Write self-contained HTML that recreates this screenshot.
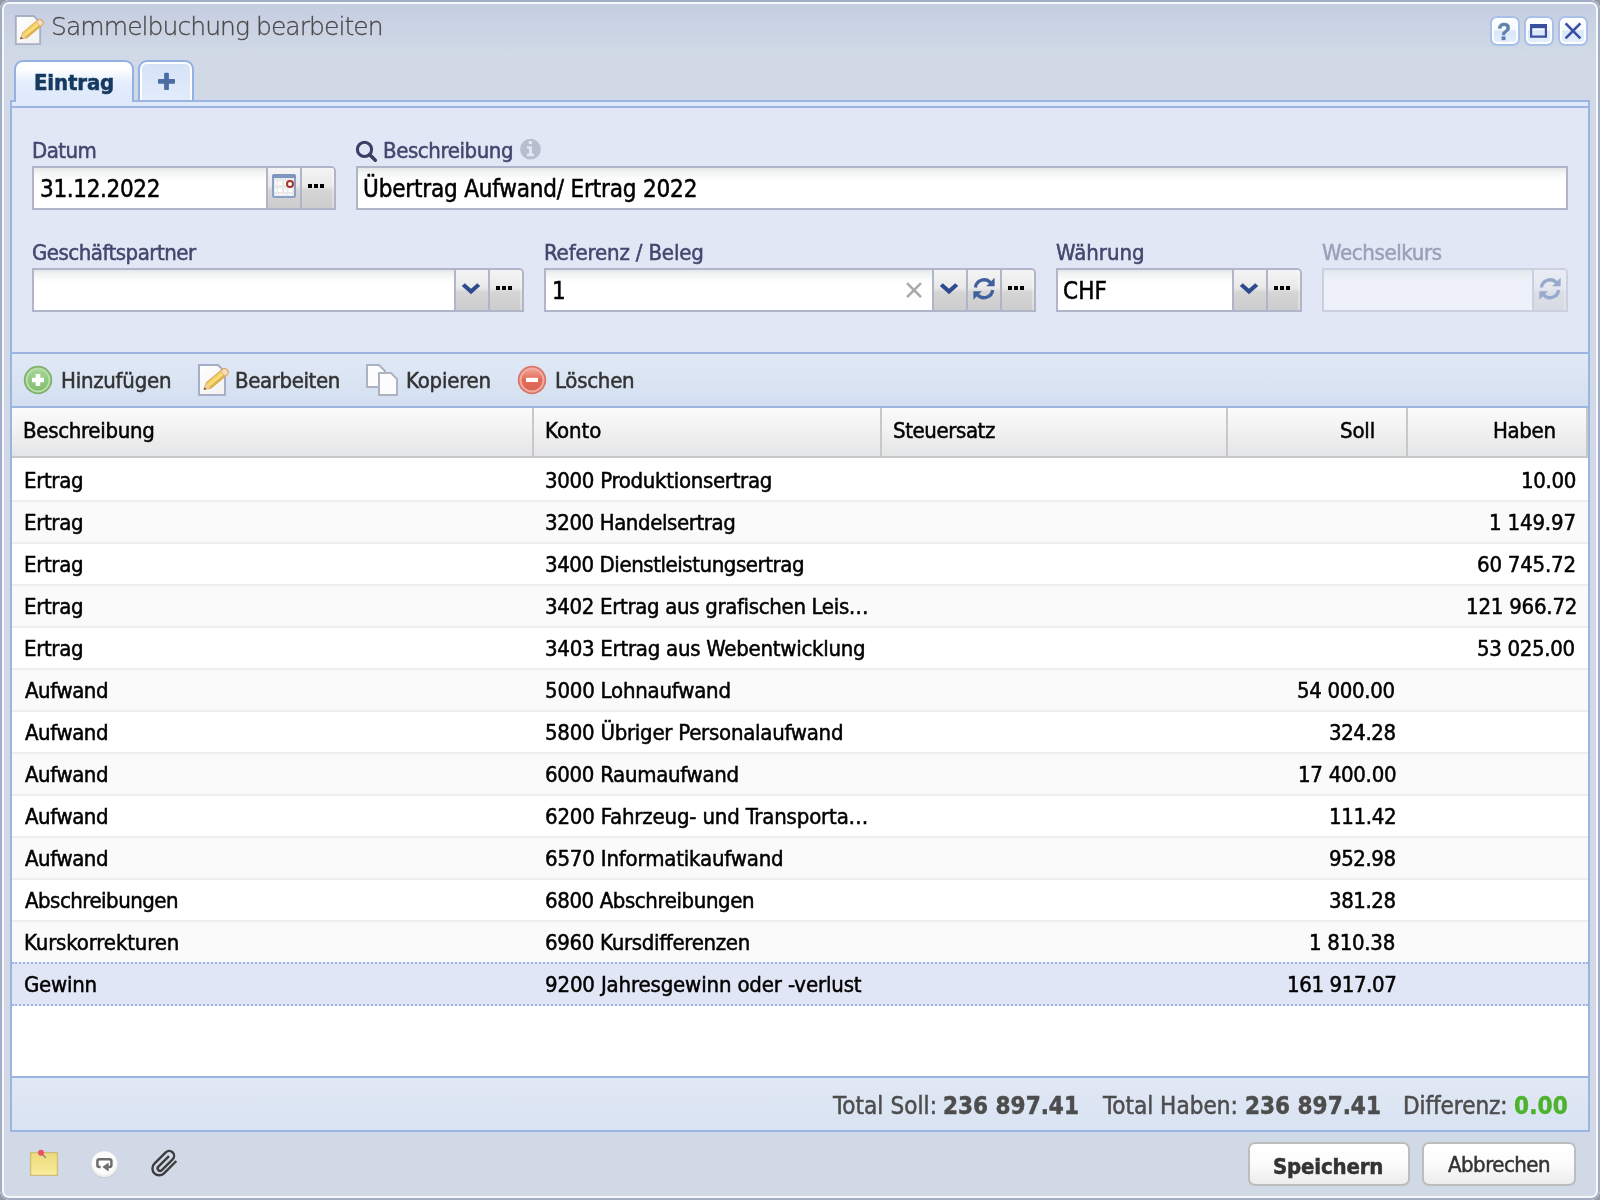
<!DOCTYPE html>
<html lang="de">
<head>
<meta charset="utf-8">
<title>Sammelbuchung bearbeiten</title>
<style>
*{box-sizing:border-box;margin:0;padding:0}
html,body{width:1600px;height:1200px;overflow:hidden;background:#979aa1}
body{font-family:"DejaVu Sans Condensed","DejaVu Sans","Liberation Sans",sans-serif;font-stretch:condensed;font-size:22px;color:#000;position:relative}
.t{position:absolute;white-space:nowrap;will-change:transform;line-height:30px;height:30px;font-size:22px;font-weight:normal}
.t{-webkit-text-stroke:.5px}
.s24{font-size:24px}
.s25{font-size:25px;font-family:"DejaVu Sans Light","DejaVu Sans",sans-serif;font-weight:200;font-stretch:normal;-webkit-text-stroke:.3px}
.b{font-weight:bold}
svg{position:absolute;overflow:visible}
#win{position:absolute;left:0;top:0;width:1600px;height:1200px;border-radius:9px;background:#d0d9e5;overflow:hidden}
#frame{position:absolute;left:0;top:0;width:1600px;height:1200px;border-radius:9px;box-shadow:inset 0 0 0 2px #a2adc4,inset 0 0 0 4px #f4f7fb;z-index:20;pointer-events:none}
#hdr{position:absolute;left:0;top:0;right:0;height:54px;background:linear-gradient(#c4cce1,#c9d1e3 40%,#d0d9e5)}
.tool{position:absolute;top:16px;width:30px;height:30px;border:2px solid #a9c1ea;border-radius:7px;background:linear-gradient(#fff 0,#f4f9ff 45%,#d9e6fb 50%,#e6effd 100%);box-shadow:inset 0 0 0 2px #fff}
.tool svg{left:-2px;top:-2px}
/* tabs */
.tab{position:absolute;top:60px;border:2px solid #93b1e2;border-bottom:0;border-radius:9px 9px 0 0}
#tab1{left:14px;width:120px;height:40px;background:linear-gradient(#fff 0,#fff 18%,#e3edfc 55%,#dfe9fa 100%);z-index:3}
#tab2{left:138px;width:56px;height:40px;background:linear-gradient(#d5e2f7 0,#e2ecfb 100%);box-shadow:inset 0 2px 0 0 #fff,inset 2px 0 0 0 #fff,inset -2px 0 0 0 #fff;z-index:1}
#tabfoot{position:absolute;left:16px;top:100px;width:116px;height:2px;background:#dfe9fa;z-index:3}
#strip{position:absolute;left:10px;top:100px;width:1580px;height:8px;border:2px solid #99b5e0;background:#dfe9fa;z-index:2}
#panel{position:absolute;left:10px;top:106px;width:1580px;height:1026px;border:2px solid #99b5e0;background:#e1e7f5}
/* form */
.fld{position:absolute;height:44px;border:2px solid #b1b5c9;background:linear-gradient(#e4e8e8 0,#f3f6f5 5px,#fff 13px,#fff 100%)}
.trg{position:absolute;top:0;width:34px;height:40px;border-left:2px solid #b1b5c9;background:linear-gradient(#f4f4f4 0,#e9e9e9 45%,#d6d6d6 55%,#cdcdcd 100%)}
.trg svg{left:0;top:0}
.fld.tr{border-top-right-radius:5px}
.fld.tr .trg:last-child{border-top-right-radius:3px;box-shadow:inset -2px 0 0 rgba(255,255,255,.3)}
.dis{opacity:.45}
/* toolbar */
#tbar{position:absolute;left:12px;top:352px;width:1576px;height:56px;border-top:2px solid #99b5e0;border-bottom:2px solid #99b5e0;background:linear-gradient(#e1e9f6,#d3dff0)}
/* grid */
#ghdr{position:absolute;left:12px;top:408px;width:1576px;height:50px;border-bottom:2px solid #c8c8c8;background:linear-gradient(#fafafa 0,#f3f3f3 40%,#e4e5e6 100%)}
.hc{position:absolute;top:0;height:48px;border-right:2px solid #c8c8c8}
#gbody{position:absolute;left:12px;top:458px;width:1576px;height:618px;background:#fff}
.row{position:absolute;left:0;width:1576px;height:42px;border-top:2px solid #ededed}
.row.alt{background:#fafafa}
.row.first{border-top-color:#fff}
.row.sel{background:#e0e6f5;border-top:2px dotted #9db5e0;border-bottom:2px dotted #9db5e0;height:44px;z-index:2}
#foot{position:absolute;left:12px;top:1076px;width:1576px;height:56px;border-top:2px solid #99b5e0;border-bottom:2px solid #99b5e0;background:linear-gradient(#e1e8f5,#d9e3f2)}
.btn{position:absolute;top:1142px;height:44px;border:2px solid #bdbdbd;border-radius:7px;background:linear-gradient(#fff 0,#fbfbfb 50%,#ececec 100%)}
</style>
</head>
<body>
<div id="win">
  <div id="hdr"></div><div id="frame"></div>
  <svg style="left:13px;top:15px" width="30" height="30" viewBox="0 0 32 32">
<defs><linearGradient id="pg13" x1="0" y1="0" x2="1" y2="1"><stop offset="0" stop-color="#fff"/><stop offset="1" stop-color="#f1f1f1"/></linearGradient></defs>
<path d="M3 1H22L29 8V31H3Z" fill="url(#pg13)" stroke="#a7afc6" stroke-width="2" stroke-linejoin="round"/>
<g transform="translate(7.5 25.8) rotate(-39.9)">
<path d="M0 0L6.5 -4H27.5Q31.5 -4 31.5 0Q31.5 4 27.5 4H6.5Z" fill="#d9a046"/>
<path d="M6.5 -3H25V3H6.5Z" fill="#f6e07a"/>
<path d="M6.5 -3H25V-1.2H6.5Z" fill="#f1cf63"/>
<path d="M6.5 1.4H25V3H6.5Z" fill="#e0ae4e"/>
<path d="M1.2 -.2L6.5 -3V3Z" fill="#f3cfa6"/>
<path d="M0 0L2.6 -1.5V1.5Z" fill="#6f5a22"/>
<path d="M25.5 -3H27.6Q30.4 -3 30.4 0Q30.4 3 27.6 3H25.5Z" fill="#f6dcc3"/>
</g></svg>
  <span id="title" class="t s25" style="left:50.50px;top:12.0px;letter-spacing:-0.94px;color:#4a4a4a">Sammelbuchung bearbeiten</span>
  <div class="tool" style="left:1490px"><span class="t b" style="left:5px;top:-1.5px;font-size:23px;color:#6082ab;text-shadow:0 1px 0 #fff;font-family:'Liberation Sans',sans-serif">?</span></div>
  <div class="tool" style="left:1524px"><svg width="30" height="30" viewBox="0 0 30 30"><path d="M7.1 9.1H21.9V20.7H7.1Z" fill="none" stroke="#3b4fa1" stroke-width="2.2"/><rect x="6" y="8" width="17" height="4.2" fill="#3b4fa1"/></svg></div>
  <div class="tool" style="left:1558px"><svg width="30" height="30" viewBox="0 0 30 30"><path d="M7.6 7.4L22.4 22.4M22.4 7.4L7.6 22.4" stroke="#3b4fa1" stroke-width="2.6" fill="none"/></svg></div>

  <div id="tab1" class="tab"><span id="tabt" class="t b" style="left:17.50px;top:6.0px;letter-spacing:-0.15px;color:#15395f">Eintrag</span></div>
  <div id="tabfoot"></div><div id="tab2" class="tab"></div><svg style="left:156px;top:70px;z-index:4" width="22" height="22" viewBox="156 70 22 22"><path d="M164.1 73.8Q164.1 72.8 165.1 72.8H167.9Q168.9 72.8 168.9 73.8V79H174Q175 79 175 80V82.8Q175 83.8 174 83.8H168.9V89Q168.9 90 167.9 90H165.1Q164.1 90 164.1 89V83.8H159Q158 83.8 158 82.8V80Q158 79 159 79H164.1Z" fill="#4b6ca3"/></svg>
  <div id="strip"></div>
  <div id="panel"></div>

  <span id="l_datum" class="t" style="left:32.00px;top:136.0px;letter-spacing:-0.54px;color:#44466d">Datum</span>
  <svg style="left:354px;top:138px" width="24" height="24" viewBox="354 138 24 24">
<circle cx="364.5" cy="149.4" r="7.1" fill="none" stroke="#3c3e64" stroke-width="3.1"/>
<path d="M369.8 154.8L375.3 160.2" stroke="#3c3e64" stroke-width="3.6" stroke-linecap="round"/></svg><span id="l_beschr" class="t" style="left:382.75px;top:136.0px;letter-spacing:-0.41px;color:#44466d">Beschreibung</span><svg style="left:518px;top:137px" width="24" height="24" viewBox="518 137 24 24">
<circle cx="530.5" cy="149.2" r="10.4" fill="#b8becd"/>
<path d="M528.7 141h3.2v3h-3.2zM527 146.2h4.9v7.4h2.1v2.6h-7v-2.6h2v-4.8h-2z" fill="#e1e7f5"/></svg>
  <span id="l_gp" class="t" style="left:32.00px;top:238.0px;letter-spacing:-0.49px;color:#44466d">Geschäftspartner</span>
  <span id="l_ref" class="t" style="left:543.50px;top:238.0px;letter-spacing:-0.15px;color:#44466d">Referenz / Beleg</span>
  <span id="l_wae" class="t" style="left:1056.00px;top:238.0px;letter-spacing:0.00px;color:#44466d">Währung</span>
  <span id="l_wk" class="t dis" style="left:1322.00px;top:238.0px;letter-spacing:-0.36px;color:#44466d">Wechselkurs</span>

  <div class="fld tr" style="left:32px;top:166px;width:304px"><span id="v_datum" class="t s24" style="left:5.50px;top:6.0px;letter-spacing:-0.35px">31.12.2022</span>
    <div class="trg" style="left:232px"><svg style="left:0;top:0" width="32" height="40" viewBox="268 168 32 40">
<rect x="273" y="175" width="22" height="22" rx="1.5" fill="#e9e9e9" stroke="#8aa0c6" stroke-width="2"/>
<path d="M272 176.5Q272 174 274.5 174H293.5Q296 174 296 176.5V178H272Z" fill="#7d95c0"/>
<path d="M278 181.6h4v3.4h-4zM284.2 181.6h2.4v3.4h-2.4zM278 188.6h4v3.4h-4zM284.2 188.6h2.4v3.4h-2.4zM288.6 188.6h3.6v3.4h-3.6zM276 194h2v1.2h-2zM279 194h4v1.2h-4zM284.2 194h2.4v1.2h-2.4zM288.6 194h3.6v1.2h-3.6zM275 181.6h1.6v3.4H275zM275 188.6h1.6v3.4H275z" fill="#fff"/>
<circle cx="290" cy="184" r="3" fill="#fff" stroke="#a2362f" stroke-width="2"/></svg></div><div class="trg" style="left:266px"><svg width="32" height="40" viewBox="0 0 32 40"><path d="M6 16h4v4h-4zM12 16h4v4h-4zM18 16h4v4h-4z" fill="#000"/></svg></div></div>
  <div class="fld" style="left:356px;top:166px;width:1212px"><span id="v_beschr" class="t s24" style="left:5.25px;top:6.0px;letter-spacing:-0.18px">Übertrag Aufwand/ Ertrag 2022</span></div>
  <div class="fld tr" style="left:32px;top:268px;width:492px">
    <div class="trg" style="left:420px"><svg width="32" height="40" viewBox="0 0 32 40"><path d="M5.800000000000001 16.1L8.8 13.3L15 18.8L21.2 13.3L24.2 16.1L15 24.3Z" fill="#2e4b8f"/></svg></div><div class="trg" style="left:454px"><svg width="32" height="40" viewBox="0 0 32 40"><path d="M6 16h4v4h-4zM12 16h4v4h-4zM18 16h4v4h-4z" fill="#000"/></svg></div></div>
  <div class="fld tr" style="left:544px;top:268px;width:492px"><span id="v_ref" class="t s24" style="left:5.75px;top:6.0px;letter-spacing:-0.45px">1</span><svg style="left:358px;top:10px" width="20" height="20" viewBox="358 10 20 20"><path d="M361 13.100000000000001L375 27.1M375 13.100000000000001L361 27.1" stroke="#a9a9a9" stroke-width="2.6" fill="none"/></svg>
    <div class="trg" style="left:386px"><svg width="32" height="40" viewBox="0 0 32 40"><path d="M5.800000000000001 16.1L8.8 13.3L15 18.8L21.2 13.3L24.2 16.1L15 24.3Z" fill="#2e4b8f"/></svg></div><div class="trg" style="left:420px"><svg width="32" height="40" viewBox="0 0 32 40"><g transform="translate(16 18.75)" fill="none" stroke="#3f5f9f" stroke-width="3.3">
<path d="M-8.6 -1.2A8.7 8.7 0 0 1 6.4 -6.2"/><path d="M8.6 1.2A8.7 8.7 0 0 1 -6.4 6.2"/></g>
<g transform="translate(16 18.75)" fill="#3f5f9f"><path d="M10.6 -11V-2.6H2.2Z"/><path d="M-10.6 11V2.6H-2.2Z"/></g></svg></div><div class="trg" style="left:454px"><svg width="32" height="40" viewBox="0 0 32 40"><path d="M6 16h4v4h-4zM12 16h4v4h-4zM18 16h4v4h-4z" fill="#000"/></svg></div></div>
  <div class="fld tr" style="left:1056px;top:268px;width:246px"><span id="v_wae" class="t s24" style="left:5.00px;top:6.0px;letter-spacing:0.09px">CHF</span>
    <div class="trg" style="left:174px"><svg width="32" height="40" viewBox="0 0 32 40"><path d="M5.800000000000001 16.1L8.8 13.3L15 18.8L21.2 13.3L24.2 16.1L15 24.3Z" fill="#2e4b8f"/></svg></div><div class="trg" style="left:208px"><svg width="32" height="40" viewBox="0 0 32 40"><path d="M6 16h4v4h-4zM12 16h4v4h-4zM18 16h4v4h-4z" fill="#000"/></svg></div></div>
  <div class="fld tr dis" style="left:1322px;top:268px;width:246px">
    <div class="trg" style="left:208px"><svg width="32" height="40" viewBox="0 0 32 40"><g transform="translate(16 18.75)" fill="none" stroke="#3f5f9f" stroke-width="3.3">
<path d="M-8.6 -1.2A8.7 8.7 0 0 1 6.4 -6.2"/><path d="M8.6 1.2A8.7 8.7 0 0 1 -6.4 6.2"/></g>
<g transform="translate(16 18.75)" fill="#3f5f9f"><path d="M10.6 -11V-2.6H2.2Z"/><path d="M-10.6 11V2.6H-2.2Z"/></g></svg></div></div>

  <div id="tbar">
    <svg style="left:10px;top:10px" width="32" height="32" viewBox="-16 -16 32 32">
<defs><linearGradient id="ga" x1="0" y1="0" x2="0" y2="1"><stop offset="0" stop-color="#a6d596"/><stop offset="1" stop-color="#7fbe6a"/></linearGradient></defs>
<circle r="14.2" fill="#7db168"/><circle r="12.4" fill="#b9ddab"/><circle r="10.5" fill="url(#ga)"/>
<path d="M-6 -2.3H-2.3V-6H2.3V-2.3H6V2.3H2.3V6H-2.3V2.3H-6Z" fill="#fff"/></svg><svg style="left:184px;top:10px" width="32" height="32" viewBox="0 0 32 32">
<defs><linearGradient id="pg184" x1="0" y1="0" x2="1" y2="1"><stop offset="0" stop-color="#fff"/><stop offset="1" stop-color="#f1f1f1"/></linearGradient></defs>
<path d="M3 1H22L29 8V31H3Z" fill="url(#pg184)" stroke="#a7afc6" stroke-width="2" stroke-linejoin="round"/>
<g transform="translate(7.5 25.8) rotate(-39.9)">
<path d="M0 0L6.5 -4H27.5Q31.5 -4 31.5 0Q31.5 4 27.5 4H6.5Z" fill="#d9a046"/>
<path d="M6.5 -3H25V3H6.5Z" fill="#f6e07a"/>
<path d="M6.5 -3H25V-1.2H6.5Z" fill="#f1cf63"/>
<path d="M6.5 1.4H25V3H6.5Z" fill="#e0ae4e"/>
<path d="M1.2 -.2L6.5 -3V3Z" fill="#f3cfa6"/>
<path d="M0 0L2.6 -1.5V1.5Z" fill="#6f5a22"/>
<path d="M25.5 -3H27.6Q30.4 -3 30.4 0Q30.4 3 27.6 3H25.5Z" fill="#f6dcc3"/>
</g></svg><svg style="left:354px;top:10px" width="32" height="32" viewBox="0 0 32 32">
<path d="M1 1H13L19 7V23H1Z" fill="#fcfcfc" stroke="#aab2c4" stroke-width="2" stroke-linejoin="round"/>
<path d="M13 9H25L31 15V31H13Z" fill="#fcfcfc" stroke="#aab2c4" stroke-width="2" stroke-linejoin="round"/></svg><svg style="left:504px;top:10px" width="32" height="32" viewBox="-16 -16 32 32">
<defs><linearGradient id="gd" x1="0" y1="0" x2="0" y2="1"><stop offset="0" stop-color="#f0a090"/><stop offset=".5" stop-color="#e46a58"/><stop offset="1" stop-color="#dc6455"/></linearGradient></defs>
<circle r="14.2" fill="#dd7366"/><circle r="12.4" fill="#efaea3"/><circle r="10.5" fill="url(#gd)"/>
<rect x="-6" y="-2.2" width="12" height="4.2" fill="#fff"/></svg>
    <span id="tb_add" class="t" style="left:49.00px;top:12.0px;letter-spacing:-0.25px;color:#333">Hinzufügen</span>
    <span id="tb_edit" class="t" style="left:223.25px;top:12.0px;letter-spacing:-0.38px;color:#333">Bearbeiten</span>
    <span id="tb_copy" class="t" style="left:393.50px;top:12.0px;letter-spacing:-0.22px;color:#333">Kopieren</span>
    <span id="tb_del" class="t" style="left:543.00px;top:12.0px;letter-spacing:-0.27px;color:#333">Löschen</span>
  </div>

  <div id="ghdr">
    <div class="hc" style="left:0;width:522px"><span id="h1" class="t" style="left:11.00px;top:8.0px;letter-spacing:-0.30px">Beschreibung</span></div>
    <div class="hc" style="left:522px;width:348px"><span id="h2" class="t" style="left:11.00px;top:8.0px;letter-spacing:0.00px">Konto</span></div>
    <div class="hc" style="left:870px;width:346px"><span id="h3" class="t" style="left:10.75px;top:8.0px;letter-spacing:-0.40px">Steuersatz</span></div>
    <div class="hc" style="left:1216px;width:180px"><span id="h4" class="t" style="left:111.50px;top:8.0px;letter-spacing:-0.15px">Soll</span></div>
    <div class="hc" style="left:1396px;width:180px"><span id="h5" class="t" style="left:84.75px;top:8.0px;letter-spacing:-0.34px">Haben</span></div>
  </div>

  <div id="gbody">
    <div class="row first" style="top:0"><span id="r0a" class="t" style="left:11.50px;top:6.0px;letter-spacing:-0.34px">Ertrag</span><span id="r0b" class="t" style="left:533.00px;top:6.0px;letter-spacing:-0.30px">3000 Produktionsertrag</span><span id="r0h" class="t" style="left:1508.50px;top:6.0px;letter-spacing:-0.32px">10.00</span></div>
    <div class="row alt" style="top:42px"><span id="r1a" class="t" style="left:11.50px;top:6.0px;letter-spacing:-0.34px">Ertrag</span><span id="r1b" class="t" style="left:533.00px;top:6.0px;letter-spacing:-0.40px">3200 Handelsertrag</span><span id="r1h" class="t" style="left:1476.50px;top:6.0px;letter-spacing:-0.16px">1 149.97</span></div>
    <div class="row" style="top:84px"><span id="r2a" class="t" style="left:11.50px;top:6.0px;letter-spacing:-0.34px">Ertrag</span><span id="r2b" class="t" style="left:533.00px;top:6.0px;letter-spacing:-0.43px">3400 Dienstleistungsertrag</span><span id="r2h" class="t" style="left:1465.00px;top:6.0px;letter-spacing:-0.21px">60 745.72</span></div>
    <div class="row alt" style="top:126px"><span id="r3a" class="t" style="left:11.50px;top:6.0px;letter-spacing:-0.34px">Ertrag</span><span id="r3b" class="t" style="left:533.00px;top:6.0px;letter-spacing:-0.33px">3402 Ertrag aus grafischen Leis…</span><span id="r3h" class="t" style="left:1454.00px;top:6.0px;letter-spacing:-0.21px">121 966.72</span></div>
    <div class="row" style="top:168px"><span id="r4a" class="t" style="left:11.50px;top:6.0px;letter-spacing:-0.34px">Ertrag</span><span id="r4b" class="t" style="left:533.00px;top:6.0px;letter-spacing:-0.26px">3403 Ertrag aus Webentwicklung</span><span id="r4h" class="t" style="left:1465.00px;top:6.0px;letter-spacing:-0.32px">53 025.00</span></div>
    <div class="row alt" style="top:210px"><span id="r5a" class="t" style="left:12.50px;top:6.0px;letter-spacing:-0.42px">Aufwand</span><span id="r5b" class="t" style="left:533.00px;top:6.0px;letter-spacing:-0.21px">5000 Lohnaufwand</span><span id="r5s" class="t" style="left:1285.00px;top:6.0px;letter-spacing:-0.32px">54 000.00</span></div>
    <div class="row" style="top:252px"><span id="r6a" class="t" style="left:12.50px;top:6.0px;letter-spacing:-0.42px">Aufwand</span><span id="r6b" class="t" style="left:533.00px;top:6.0px;letter-spacing:-0.25px">5800 Übriger Personalaufwand</span><span id="r6s" class="t" style="left:1316.50px;top:6.0px;letter-spacing:-0.45px">324.28</span></div>
    <div class="row alt" style="top:294px"><span id="r7a" class="t" style="left:12.50px;top:6.0px;letter-spacing:-0.42px">Aufwand</span><span id="r7b" class="t" style="left:533.00px;top:6.0px;letter-spacing:-0.30px">6000 Raumaufwand</span><span id="r7s" class="t" style="left:1285.50px;top:6.0px;letter-spacing:-0.27px">17 400.00</span></div>
    <div class="row" style="top:336px"><span id="r8a" class="t" style="left:12.50px;top:6.0px;letter-spacing:-0.42px">Aufwand</span><span id="r8b" class="t" style="left:533.00px;top:6.0px;letter-spacing:-0.17px">6200 Fahrzeug- und Transporta…</span><span id="r8s" class="t" style="left:1316.50px;top:6.0px;letter-spacing:-0.31px">111.42</span></div>
    <div class="row alt" style="top:378px"><span id="r9a" class="t" style="left:12.50px;top:6.0px;letter-spacing:-0.42px">Aufwand</span><span id="r9b" class="t" style="left:533.00px;top:6.0px;letter-spacing:-0.17px">6570 Informatikaufwand</span><span id="r9s" class="t" style="left:1316.50px;top:6.0px;letter-spacing:-0.45px">952.98</span></div>
    <div class="row" style="top:420px"><span id="r10a" class="t" style="left:12.50px;top:6.0px;letter-spacing:-0.51px">Abschreibungen</span><span id="r10b" class="t" style="left:533.00px;top:6.0px;letter-spacing:-0.40px">6800 Abschreibungen</span><span id="r10s" class="t" style="left:1316.50px;top:6.0px;letter-spacing:-0.45px">381.28</span></div>
    <div class="row alt" style="top:462px"><span id="r11a" class="t" style="left:11.50px;top:6.0px;letter-spacing:-0.15px">Kurskorrekturen</span><span id="r11b" class="t" style="left:533.00px;top:6.0px;letter-spacing:-0.31px">6960 Kursdifferenzen</span><span id="r11s" class="t" style="left:1297.00px;top:6.0px;letter-spacing:-0.27px">1 810.38</span></div>
    <div class="row sel" style="top:504px"><span id="r12a" class="t" style="left:11.50px;top:6.0px;letter-spacing:-0.27px">Gewinn</span><span id="r12b" class="t" style="left:533.00px;top:6.0px;letter-spacing:-0.15px">9200 Jahresgewinn oder -verlust</span><span id="r12s" class="t" style="left:1275.00px;top:6.0px;letter-spacing:-0.39px">161 917.07</span></div>
  </div>

  <div id="foot">
    <span id="f1" class="t s24" style="left:820.50px;top:13.0px;letter-spacing:0.09px;color:#4d4d4d">Total Soll:</span><span id="f1b" class="t s24 b" style="left:931.00px;top:13.0px;letter-spacing:0.00px;color:#4d4d4d">236 897.41</span><span id="f2" class="t s24" style="left:1091.00px;top:13.0px;letter-spacing:0.04px;color:#4d4d4d">Total Haben:</span><span id="f2b" class="t s24 b" style="left:1233.25px;top:13.0px;letter-spacing:0.00px;color:#4d4d4d">236 897.41</span><span id="f3" class="t s24" style="left:1390.50px;top:13.0px;letter-spacing:-0.05px;color:#4d4d4d">Differenz:</span><span id="f3b" class="t s24 b" style="left:1502.00px;top:13.0px;letter-spacing:0.15px;color:#4db32d">0.00</span>
  </div>

  <svg style="left:26px;top:1146px" width="36" height="36" viewBox="26 1146 36 36">
<defs><linearGradient id="gn" x1="0" y1="0" x2="0" y2="1"><stop offset="0" stop-color="#ecd97c"/><stop offset="1" stop-color="#f9ee9c"/></linearGradient></defs>
<rect x="30.6" y="1152.6" width="26.8" height="22.8" fill="url(#gn)" stroke="#cdbd7c" stroke-width="1.3"/>
<path d="M41.5 1153.5L45.5 1157.5" stroke="#8a8a8a" stroke-width="1.6" stroke-linecap="round"/>
<circle cx="41" cy="1152.8" r="3" fill="#e8525f"/></svg><svg style="left:88px;top:1148px" width="34" height="34" viewBox="88 1148 34 34">
<defs><radialGradient id="gl" cx=".5" cy=".4" r=".6"><stop offset="0" stop-color="#fff"/><stop offset=".75" stop-color="#fbfbfb"/><stop offset="1" stop-color="#e9e9e9"/></radialGradient></defs>
<circle cx="104.4" cy="1165.2" r="13" fill="#b9bec8" opacity=".55"/>
<circle cx="104.4" cy="1164.3" r="13" fill="url(#gl)"/>
<path d="M100.6 1167H99.4Q97.4 1167 97.4 1165V1161.2Q97.4 1159.2 99.4 1159.2H109.4Q111.4 1159.2 111.4 1161.2V1165Q111.4 1167 109.4 1167H108" fill="none" stroke="#6d6d6d" stroke-width="2.5"/>
<path d="M102.4 1167L108.6 1162.4V1171.6Z" fill="#6d6d6d"/></svg><svg style="left:148px;top:1146px" width="34" height="34" viewBox="148 1146 34 34">
<g transform="translate(164.1 1163.6) rotate(-45)" fill="none" stroke="#3d3d3d" stroke-width="2.4">
<path d="M10.5 6.8H-6.9A6.8 6.8 0 0 1 -6.9 -6.8H9.1A4.9 4.9 0 0 1 9.1 3H-6.2A2.45 2.45 0 0 1 -6.2 -1.9H8.8"/></g></svg>
  <div class="btn" style="left:1248px;width:162px"><span id="b_save" class="t b" style="left:23.25px;top:8.0px;letter-spacing:-0.17px;color:#333">Speichern</span></div>
  <div class="btn" style="left:1422px;width:154px"><span id="b_cancel" class="t" style="left:24.25px;top:6.0px;letter-spacing:-0.51px;color:#333">Abbrechen</span></div>
</div>
</body>
</html>
